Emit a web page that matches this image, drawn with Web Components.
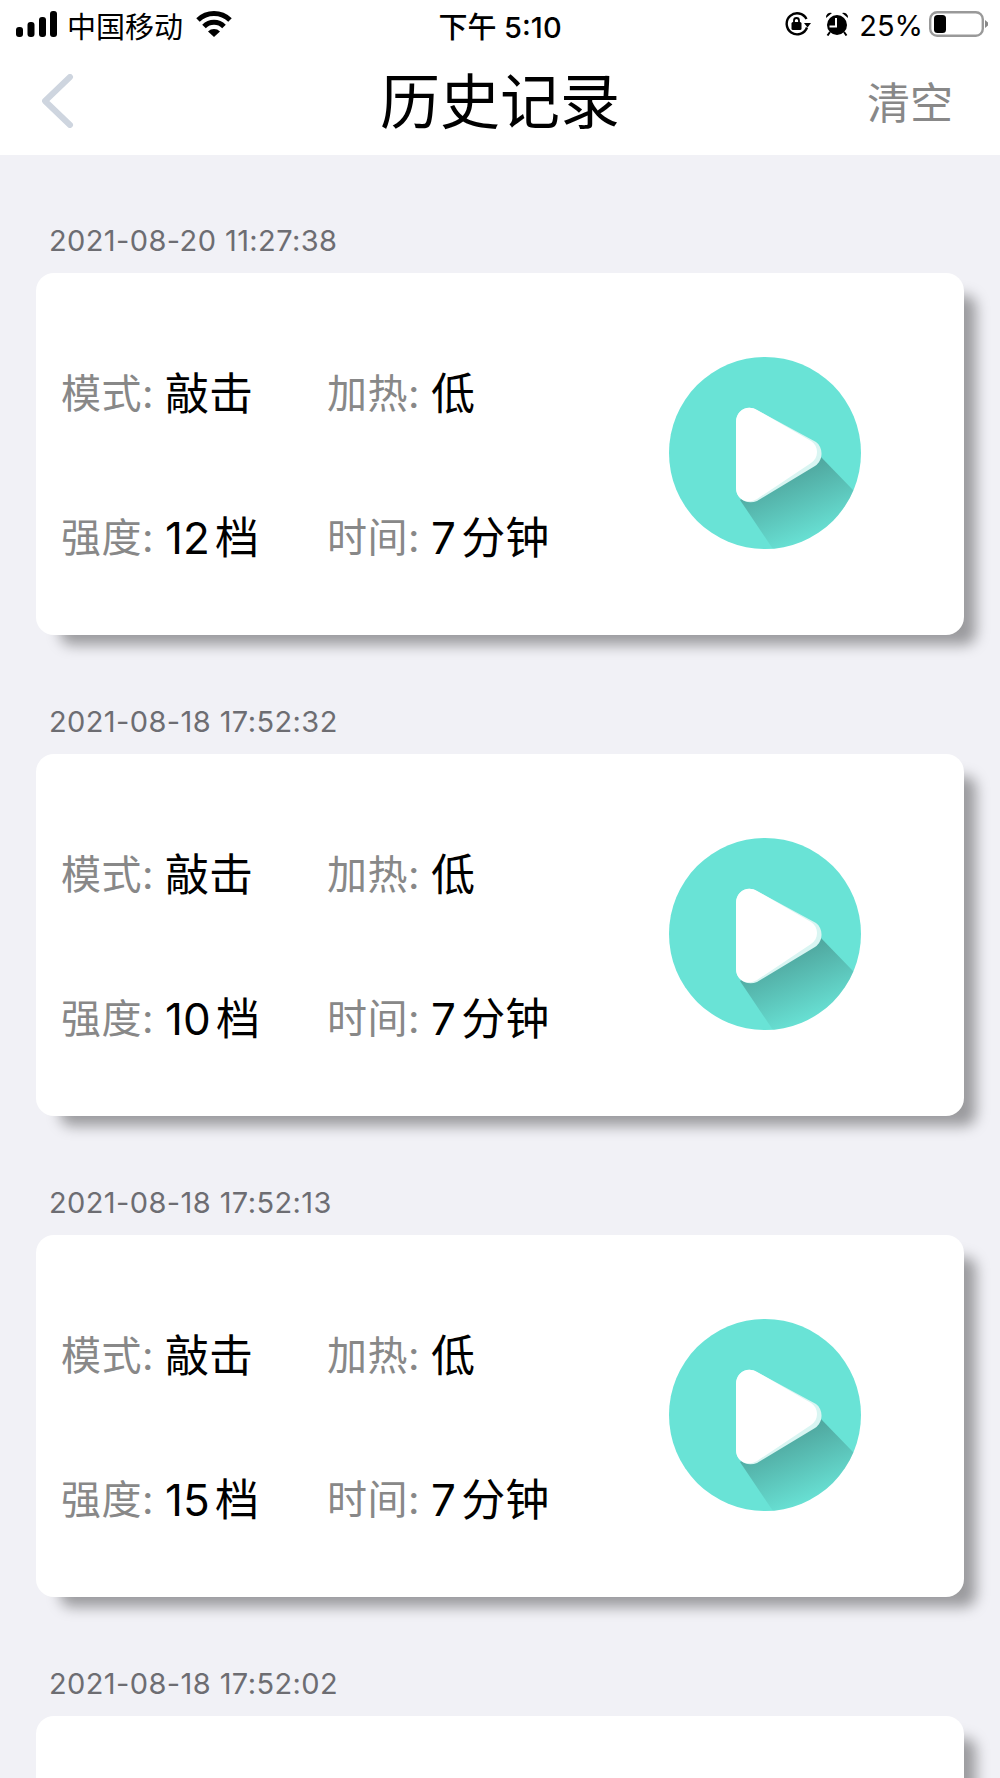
<!DOCTYPE html>
<html lang="zh">
<head>
<meta charset="utf-8">
<title>历史记录</title>
<style>
  html, body { margin: 0; height: 1778px; overflow: hidden; background: #f1f1f6; }
  body { font-family: Inter, "Noto Sans CJK SC", sans-serif; }
  .list { display: flex; flex-direction: column; gap: 68px; padding: 67px 0 0 36px; }
</style>
</head>
<body>
<status-bar></status-bar>
<nav-bar title="历史记录" action="清空"></nav-bar>
<div class="list">
  <history-item date="2021-08-20 11:27:38" level="12"></history-item>
  <history-item date="2021-08-18 17:52:32" level="10"></history-item>
  <history-item date="2021-08-18 17:52:13" level="15"></history-item>
  <!-- Only the top of this card is on screen -->
  <history-item date="2021-08-18 17:52:02"></history-item>
</div>

<script>
class StatusBar extends HTMLElement {
  constructor() {
    super();
    this.attachShadow({ mode: "open" });
  }

  connectedCallback() {
    this.shadowRoot.innerHTML = `
      <style>
        :host {
          display: grid;
          grid-template-columns: 1fr auto 1fr;
          align-items: center;
          height: 50px;
          background: #fff;
          color: #000;
          font-size: 29px;
        }
        .left, .right { display: flex; align-items: center; }
        .left { padding-left: 16px; }
        .right { justify-content: flex-end; padding-right: 12px; }
        .carrier { margin-left: 9px; }
        .wifi { margin-left: 13px; }
        .time { font-weight: 500; }
        .lock { margin-right: 14px; }
        .alarm { margin-right: 10px; }
        .battery { margin-left: 6px; }
        svg { display: block; margin-bottom: 2px; }
      </style>
      <div class="left">
        <!-- Signal bars -->
        <svg width="42" height="26" viewBox="0 0 42 26">
          <rect x="0" y="16" width="7" height="10" rx="3" />
          <rect x="11.5" y="11" width="7" height="15" rx="3" />
          <rect x="23" y="6" width="7" height="20" rx="3" />
          <rect x="34" y="0" width="7" height="26" rx="3" />
        </svg>
        <span class="carrier">中国移动</span>
        <!-- Wifi -->
        <svg class="wifi" width="36" height="26" viewBox="0 0 36 26">
          <path d="M2 9 A23 23 0 0 1 34 9" fill="none" stroke="#000" stroke-width="5" />
          <path d="M8 15.5 A14 14 0 0 1 28 15.5" fill="none" stroke="#000" stroke-width="5" />
          <path d="M12 20.5 A8.5 8.5 0 0 1 24 20.5 L18 26 Z" />
        </svg>
      </div>
      <div class="time">下午 5:10</div>
      <div class="right">
        <!-- Rotation lock -->
        <svg class="lock" width="26" height="24" viewBox="0 0 26 24">
          <path d="M21.5 7 A10.5 10.5 0 1 0 22 15.5" fill="none" stroke="#000" stroke-width="2.4" />
          <path d="M19 11 H26 L22.5 15.5 Z" />
          <rect x="6.5" y="10" width="10" height="8" rx="1.5" />
          <path d="M9 10 V8.5 A2.5 2.5 0 0 1 14 8.5 V10" fill="none" stroke="#000" stroke-width="1.8" />
        </svg>
        <!-- Alarm -->
        <svg class="alarm" width="24" height="24" viewBox="0 0 24 24">
          <circle cx="12" cy="13" r="10" />
          <path d="M1 6 A4.5 4.5 0 0 1 7 1 Z M23 6 A4.5 4.5 0 0 0 17 1 Z" />
          <path d="M5 20 L2.5 23.5 M19 20 L21.5 23.5" stroke="#000" stroke-width="2" />
          <path d="M11 6 V14.5 H4.5" fill="none" stroke="#fff" stroke-width="2" />
        </svg>
        <span>25%</span>
        <!-- Battery -->
        <svg class="battery" width="59" height="26" viewBox="0 0 59 26">
          <rect x="1.2" y="1.2" width="52.6" height="23.6" rx="7" fill="none" stroke="#999" stroke-width="2.4" />
          <rect x="5" y="4" width="12" height="18" rx="3.5" />
          <path d="M56 9 L59 11.5 V14.5 L56 17 Z" fill="#888" />
        </svg>
      </div>
    `;
  }
}

class NavBar extends HTMLElement {
  constructor() {
    super();
    this.attachShadow({ mode: "open" });
  }

  connectedCallback() {
    this.shadowRoot.innerHTML = `
      <style>
        :host {
          display: grid;
          grid-template-columns: 1fr auto 1fr;
          align-items: center;
          height: 105px;
          background: #fff;
        }
        .back { padding-left: 42px; display: flex; margin-top: -3px; }
        .title { font-size: 60px; line-height: 105px; color: #000; }
        .action { justify-self: end; padding: 0 47px 6px 0; font-size: 43px; color: #888; }
      </style>
      <div class="back">
        <svg width="32" height="54" viewBox="0 0 32 54">
          <path d="M28 3 L3 27 L28 51" fill="none" stroke="#ced5df" stroke-width="6" stroke-linecap="round" stroke-linejoin="round" />
        </svg>
      </div>
      <div class="title">${this.getAttribute("title")}</div>
      <div class="action">${this.getAttribute("action")}</div>
    `;
  }
}

class StatPair extends HTMLElement {
  constructor() {
    super();
    this.attachShadow({ mode: "open" });
  }

  connectedCallback() {
    this.shadowRoot.innerHTML = `
      <style>
        :host {
          display: flex;
          align-items: center;
          height: 50px;
          white-space: nowrap;
        }
        .label { font-size: 40px; color: #888; width: 104px; letter-spacing: 0.5px; }
        .value { font-size: 44px; color: #000; word-spacing: -7px; }
      </style>
      <span class="label">${this.getAttribute("label")}:</span>
      <span class="value"><slot></slot></span>
    `;
  }
}

class PlayIcon extends HTMLElement {
  constructor() {
    super();
    this.attachShadow({ mode: "open" });
  }

  connectedCallback() {
    this.shadowRoot.innerHTML = `
      <style>
        :host { display: block; width: 192px; height: 192px; margin-top: -2px; }
        svg { display: block; }
      </style>
      <svg width="192" height="192" viewBox="0 0 192 192">
        <defs>
          <clipPath id="disc"><circle cx="96" cy="96" r="96" /></clipPath>
          <linearGradient id="fall" gradientUnits="userSpaceOnUse" x1="105" y1="125" x2="130" y2="188">
            <stop offset="0" stop-color="#4a9a93" stop-opacity=".78" />
            <stop offset="1" stop-color="#4a9a93" stop-opacity=".02" />
          </linearGradient>
        </defs>
        <circle cx="96" cy="96" r="96" fill="#69e3d6" />
        <!-- Long shadow, cut off by the disc -->
        <path d="M71 143 L106 195 L160 200 L205 155 L184 133 L151 99 Z" fill="url(#fall)" clip-path="url(#disc)" />
        <path d="M67 65 C67 54 78 47 88 53 L147 85 C155 91 154 104 146 109 L88 144 C78 148 67 142 67 131 Z" fill="#d9f5f2" />
        <path d="M67 65 C67 54 78 47 88 53 L142 84 C150 89 150 101 142 106 L88 142 C78 148 67 142 67 131 Z" fill="#fff" />
      </svg>
    `;
  }
}

class HistoryItem extends HTMLElement {
  constructor() {
    super();
    this.attachShadow({ mode: "open" });
  }

  connectedCallback() {
    const level = this.getAttribute("level");
    const body = level
      ? `<div class="stats">
          <stat-pair label="模式">敲击</stat-pair>
          <stat-pair label="加热">低</stat-pair>
          <stat-pair label="强度">${level} 档</stat-pair>
          <stat-pair label="时间">7 分钟</stat-pair>
        </div>
        <play-icon></play-icon>`
      : "";

    this.shadowRoot.innerHTML = `
      <style>
        :host { display: block; width: 928px; }
        .date {
          font-size: 29px;
          letter-spacing: 0.4px;
          line-height: 36px;
          color: #6d6d72;
          margin: 1px 0 14px 13px;
        }
        .card {
          display: flex;
          justify-content: space-between;
          align-items: center;
          height: 362px;
          box-sizing: border-box;
          padding: 0 103px 0 25px;
          background: #fff;
          border-radius: 18px;
          box-shadow: 18px 16px 14px -6px rgba(0, 0, 0, 0.36);
        }
        .stats {
          display: grid;
          grid-template-columns: 266px auto;
          row-gap: 94px;
          margin-top: 18px;
        }
      </style>
      <div class="date">${this.getAttribute("date")}</div>
      <div class="card">${body}</div>
    `;
  }
}

customElements.define("status-bar", StatusBar);
customElements.define("nav-bar", NavBar);
customElements.define("stat-pair", StatPair);
customElements.define("play-icon", PlayIcon);
customElements.define("history-item", HistoryItem);
</script>
</body>
</html>
